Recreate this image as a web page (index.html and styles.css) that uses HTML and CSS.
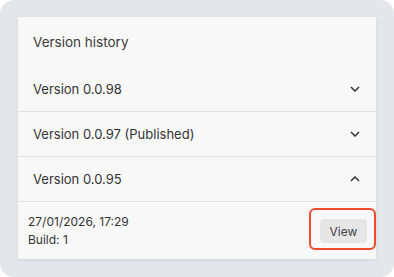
FILE: index.html
```html
<!DOCTYPE html>
<html lang="en">
<head>
    <meta charset="UTF-8">
    <title>Version history</title>
    <link rel="stylesheet" href="styles.css">
</head>
<body>
    <div class="frame">
        <div class="panel">
            <div class="panel-title">Version history</div>
            <div class="version">
                <span>Version 0.0.98</span>
                <svg class="chevron" viewBox="0 0 10 6"><path d="M1 1l4 4 4-4"/></svg>
            </div>
            <div class="version">
                <span>Version 0.0.97 (Published)</span>
                <svg class="chevron" viewBox="0 0 10 6"><path d="M1 1l4 4 4-4"/></svg>
            </div>
            <div class="version">
                <span>Version 0.0.95</span>
                <svg class="chevron" viewBox="0 0 10 6"><path d="M1 5l4-4 4 4"/></svg>
            </div>
            <div class="details">
                <div class="meta">
                    <div>27/01/2026, 17:29</div>
                    <div>Build: 1</div>
                </div>
                <div class="view-wrap">
                    <button class="view-btn">View</button>
                    <span class="highlight"></span>
                </div>
            </div>
        </div>
    </div>
</body>
</html>
```

FILE: styles.css
```css
html, body {
    margin: 0;
    padding: 0;
    background: #ffffff;
}
body {
    font-family: Inter, "Noto Sans", sans-serif;
    color: #333;
}
.frame {
    width: 394px;
    height: 277px;
    box-sizing: border-box;
    padding: 17px 18px 18px 18px;
    background: #e4e6e9;
    border-radius: 14px;
}
.panel {
    background: #f8f8f8;
    height: 242px;
    box-shadow: 0px 1px 3px rgba(0, 0, 0, 0.08);
}
.panel-title {
    height: 50px;
    display: flex;
    align-items: center;
    padding-left: 15px;
    font-size: 13.5px;
    color: #3a3a3a;
}
.version {
    height: 44px;
    display: flex;
    align-items: center;
    justify-content: space-between;
    padding: 0 16px 0 15px;
    font-size: 13px;
    color: #333;
    border-bottom: 1px solid #e2e2e2;
}
.version:first-of-type {
    height: 44px;
}
.chevron {
    width: 10px;
    height: 6px;
    fill: none;
    stroke: #333;
    stroke-width: 1.5;
}
.details {
    display: flex;
    align-items: center;
    justify-content: space-between;
    padding: 11px 9px 0 10px;
    font-size: 12px;
    line-height: 18px;
    color: #333;
}
.view-wrap {
    position: relative;
}
.view-btn {
    width: 47px;
    height: 24px;
    border: none;
    border-radius: 4px;
    background: #e6e6e6;
    color: #444;
    font-family: Inter, "Noto Sans", sans-serif;
    font-size: 12px;
    padding: 0;
}
.highlight {
    position: absolute;
    left: -11px;
    top: -11px;
    width: 63px;
    height: 38px;
    border: 2px solid #ee4a2c;
    border-radius: 6px;
}
```
